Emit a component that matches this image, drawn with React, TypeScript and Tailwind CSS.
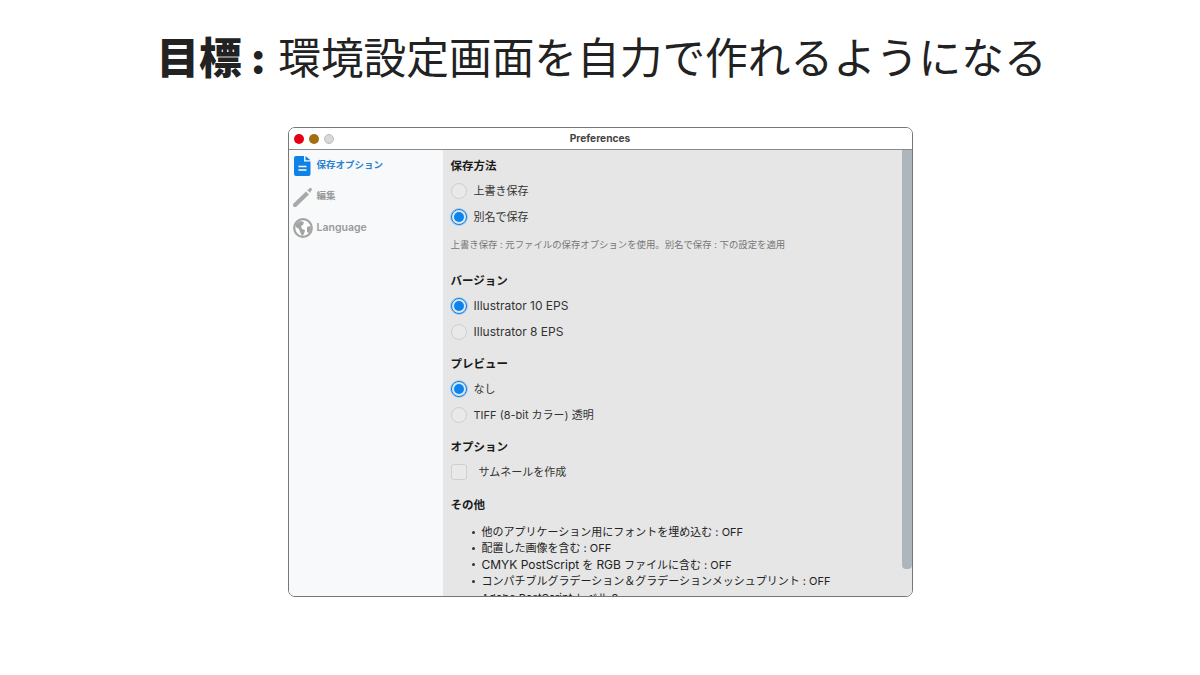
const FONT = "font-['Inter','Noto_Sans_CJK_JP',sans-serif]";

function Radio({ label, checked = false, latin = false }: { label: string; checked?: boolean; latin?: boolean }) {
  return (
    <div className="flex h-[26px] items-center">
      {checked ? (
        <span className="flex h-4 w-4 items-center justify-center rounded-full border-[1.5px] border-[#0a7fe0] bg-[#dde6f0] ring-1 ring-[#a8cbec]">
          <span className="h-[10px] w-[10px] rounded-full bg-[#0b84f0]" />
        </span>
      ) : (
        <span className="h-4 w-4 rounded-full border border-[#cfcfcf] bg-[#e9e9e9]" />
      )}
      <span className={`ml-[7px] text-[#333] ${latin ? 'text-[12px]' : 'text-[11px]'}`}>{label}</span>
    </div>
  );
}

function Heading({ children, className = '' }: { children: string; className?: string }) {
  return <h3 className={`text-[11.5px] leading-[16px] font-bold text-[#1a1a1a] ${className}`}>{children}</h3>;
}

function NavItem({ label, active = false, latin = false, children }: { label: string; active?: boolean; latin?: boolean; children: React.ReactNode }) {
  return (
    <div className="flex h-[31px] items-center pl-[3px]">
      <span className="flex h-[22px] w-[22px] items-center justify-center">{children}</span>
      <span
        className={`ml-[3px] ${latin ? 'text-[10.5px] font-semibold' : 'text-[9.5px] font-bold'} ${active ? 'text-[#2b82d0]' : 'text-[#9a9a9a]'}`}
      >
        {label}
      </span>
    </div>
  );
}

function Bullet({ children }: { children: React.ReactNode }) {
  return (
    <li className="flex h-[16.4px] items-center whitespace-nowrap">
      <span className="mr-[7px] h-[3px] w-[3px] shrink-0 rounded-full bg-[#333]" />
      <span>{children}</span>
    </li>
  );
}

export default function App() {
  return (
    <div className={`flex h-[675px] w-[1200px] flex-col items-center overflow-hidden bg-white ${FONT}`}>
      <h1 className="mt-[29px] ml-[3px] flex h-[60px] text-[42.7px] leading-[60px] whitespace-nowrap text-[#222]">
        <span className="mr-[12px] font-black">目標 :</span>
        <span>環境設定画面を自力で作れるようになる</span>
      </h1>

      <div className="mt-[38px] flex h-[470px] w-[625px] flex-col overflow-hidden rounded-[7px] border border-[#777] bg-white">
        <div className="relative flex h-[22px] shrink-0 items-center border-b border-[#8a8a8a] bg-white pl-[5px]">
          <span className="h-[10px] w-[10px] rounded-full bg-[#e60012]" />
          <span className="ml-[5px] h-[10px] w-[10px] rounded-full bg-[#a2700f]" />
          <span className="ml-[5px] h-[10px] w-[10px] rounded-full border border-[#bbb] bg-[#d8d8d8]" />
          <span className="absolute inset-x-0 text-center text-[10.2px] font-bold text-[#444]">Preferences</span>
        </div>

        <div className="flex min-h-0 flex-1">
          <aside className="flex w-[154px] shrink-0 flex-col bg-[#f7f9fb]">
            <NavItem label="保存オプション" active>
              <svg width="17" height="20" viewBox="0 0 17 20">
                <path d="M2 0h8v5.5h6.5V18a2 2 0 0 1-2 2H2a2 2 0 0 1-2-2V2a2 2 0 0 1 2-2z" fill="#0f82e6" />
                <path d="M11.5 0l5 4.2h-5z" fill="#0f82e6" />
                <path d="M4.5 10.5h8M4.5 14h8" stroke="#fff" strokeWidth="1.6" />
              </svg>
            </NavItem>
            <NavItem label="編集">
              <svg width="20" height="20" viewBox="0 0 20 20">
                <path d="M.5 16.5 13 4.5l3 3L3.5 19.5a2 2 0 0 1-3-3z" fill="#a9a9a9" />
                <path d="M14.3 3.2 17.5.6l1.6 1.6-2 3.5z" fill="#a9a9a9" />
              </svg>
            </NavItem>
            <NavItem label="Language" latin>
              <svg width="20" height="20" viewBox="0 0 20 20">
                <circle cx="10" cy="10" r="8.8" fill="#fff" stroke="#a3a3a3" strokeWidth="2.2" />
                <path d="M3 6l4-3 4 1-1 3-2 1 1 3 3 1-1 4-2 2-2-4-1-3-3-2zM14 9l3-1 1 3-2 4-2-1z" fill="#a3a3a3" />
              </svg>
            </NavItem>
          </aside>

          <main className="relative min-w-0 flex-1 overflow-hidden bg-[#e6e6e6] pt-[8px] pl-[8px]">
            <Heading className="mb-[4px]">保存方法</Heading>
            <Radio label="上書き保存" />
            <Radio label="別名で保存" checked />
            <p className="mt-[8px] text-[9.4px] leading-[13px] whitespace-nowrap text-[#777]">
              上書き保存 : 元ファイルの保存オプションを使用。別名で保存 : 下の設定を適用
            </p>

            <Heading className="mt-[22px] mb-[4px]">バージョン</Heading>
            <Radio label="Illustrator 10 EPS" checked latin />
            <Radio label="Illustrator 8 EPS" latin />

            <Heading className="mt-[11px] mb-[4px]">プレビュー</Heading>
            <Radio label="なし" checked />
            <Radio label="TIFF (8-bit カラー) 透明" />

            <Heading className="mt-[11px] mb-[4px]">オプション</Heading>
            <div className="flex h-[26px] items-center">
              <span className="h-4 w-4 rounded-[3px] border border-[#cfcfcf] bg-[#e9e9e9]" />
              <span className="ml-[12px] text-[11px] text-[#333]">サムネールを作成</span>
            </div>

            <Heading className="mt-[12px]">その他</Heading>
            <ul className="mt-[11px] pl-[21px] text-[11px] text-[#222]">
              <Bullet>他のアプリケーション用にフォントを埋め込む : OFF</Bullet>
              <Bullet>配置した画像を含む : OFF</Bullet>
              <Bullet>
                <span className="text-[12px]">CMYK PostScript</span> を <span className="text-[12px]">RGB</span> ファイルに含む : OFF
              </Bullet>
              <Bullet>コンパチブルグラデーション＆グラデーションメッシュプリント : OFF</Bullet>
              <Bullet>Adobe PostScript レベル 3</Bullet>
            </ul>

            <div className="absolute top-0 right-0 h-[419px] w-[10px] rounded-b-[4px] bg-[#aeb6bd]" />
          </main>
        </div>
      </div>
    </div>
  );
}
